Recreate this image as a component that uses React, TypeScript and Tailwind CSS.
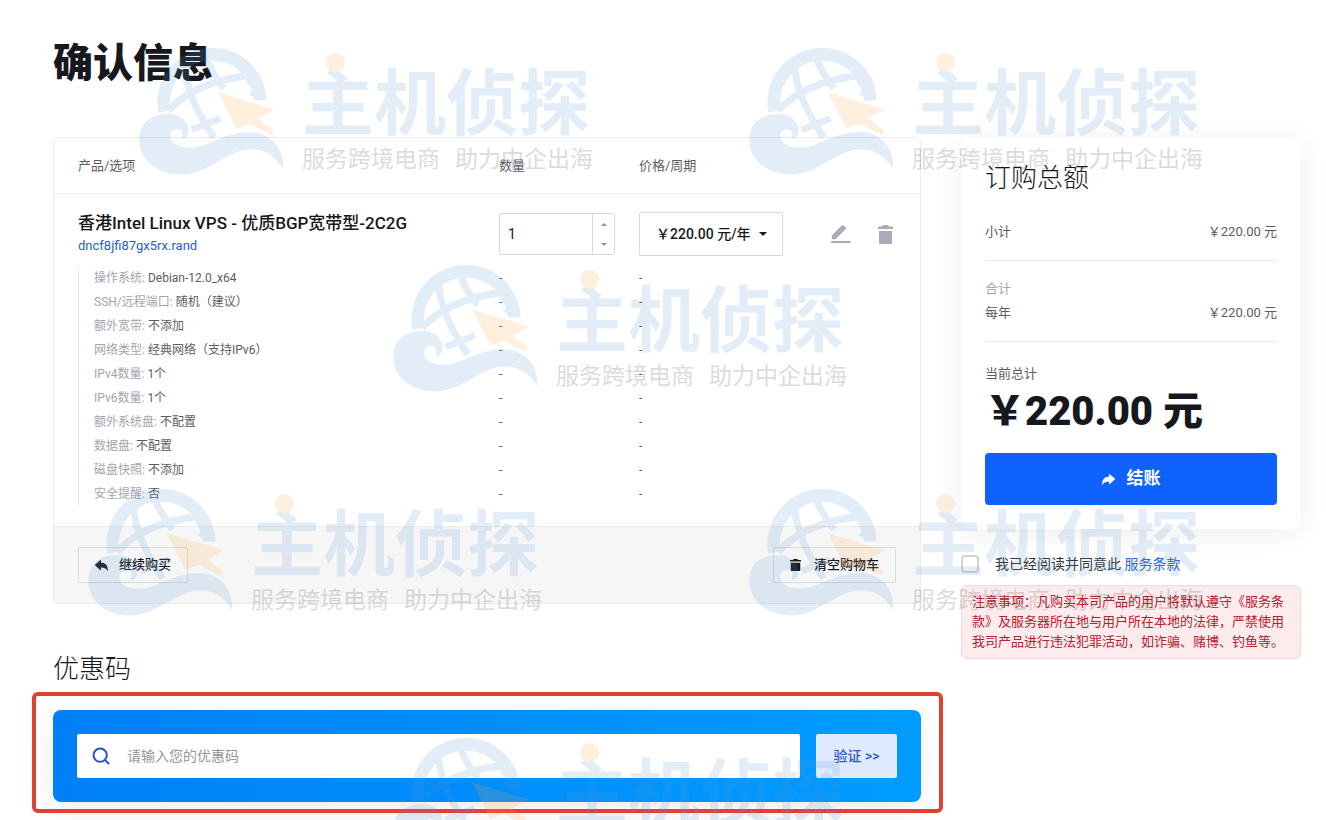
import { useState } from "react"
import { Search } from "lucide-react"

type Option = { label: string; value: string }

const options: Option[] = [
  { label: "操作系统", value: "Debian-12.0_x64" },
  { label: "SSH/远程端口", value: "随机（建议）" },
  { label: "额外宽带", value: "不添加" },
  { label: "网络类型", value: "经典网络（支持IPv6）" },
  { label: "IPv4数量", value: "1个" },
  { label: "IPv6数量", value: "1个" },
  { label: "额外系统盘", value: "不配置" },
  { label: "数据盘", value: "不配置" },
  { label: "磁盘快照", value: "不添加" },
  { label: "安全提醒", value: "否" },
]

export default function App() {
  return (
    <div className="relative min-h-screen overflow-hidden bg-white pt-10 pr-[25px] pb-[18px] pl-[53px] font-['Roboto','Noto_Sans_CJK_SC',sans-serif] text-[13px] text-[#5b5d66]">
      <h1 className="text-[40px] leading-12 font-black text-[#16181d]">确认信息</h1>
      <div className="mt-[49px] flex items-start gap-10">
        <main className="min-w-0 flex-1">
          <Cart />
          <Promo />
        </main>
        <aside className="w-[340px] shrink-0">
          <Summary />
          <Terms />
        </aside>
      </div>
      <div aria-hidden="true" className="pointer-events-none absolute inset-0 overflow-hidden opacity-[0.17]">
        <Watermark className="top-12 left-[139px]" />
        <Watermark className="top-12 left-[749px]" />
        <Watermark className="top-[265px] left-[393px]" />
        <Watermark className="top-[489px] left-[88px]" />
        <Watermark className="top-[489px] left-[749px]" />
        <Watermark className="top-[738px] left-[393px]" />
      </div>
    </div>
  )
}

function Cart() {
  const [qty, setQty] = useState(1)

  return (
    <section className="overflow-hidden rounded-md border border-[#ebebed]">
      <table className="w-full table-fixed border-collapse text-left">
        <colgroup>
          <col />
          <col className="w-[140px]" />
          <col className="w-[144px]" />
          <col className="w-[137px]" />
        </colgroup>
        <thead>
          <tr className="h-[55px] border-b border-[#ebebed]">
            <th className="pl-6 font-normal">产品/选项</th>
            <th className="font-normal">数量</th>
            <th className="font-normal">价格/周期</th>
            <td />
          </tr>
        </thead>
        <tbody>
          <tr className="h-[73px]">
            <td className="pt-2 pl-6">
              <div className="text-[17px] leading-6 font-medium text-[#16181d]">香港Intel Linux VPS - 优质BGP宽带型-2C2G</div>
              <a href="#" className="block leading-[22px] text-[#1f5fd0]">
                dncf8jfi87gx5rx.rand
              </a>
            </td>
            <td className="pt-[9px]">
              <div className="flex h-[42px] w-[116px] rounded-xs border border-[#d9dadd]">
                <input
                  aria-label="数量"
                  inputMode="numeric"
                  value={qty}
                  onChange={(e) => setQty(Number(e.target.value) || 1)}
                  className="w-0 flex-1 px-2 text-sm text-[#16181d] outline-none"
                />
                <div className="flex w-[22px] flex-col border-l border-[#d9dadd] text-[#8e9098]">
                  <button aria-label="增加" onClick={() => setQty(qty + 1)} className="flex flex-1 items-center justify-center">
                    <Caret className="h-[3px] w-[6px] rotate-180" />
                  </button>
                  <button aria-label="减少" onClick={() => setQty(Math.max(1, qty - 1))} className="flex flex-1 items-center justify-center">
                    <Caret className="h-[3px] w-[6px]" />
                  </button>
                </div>
              </div>
            </td>
            <td className="pt-[9px]">
              <div className="relative">
                <select
                  aria-label="价格/周期"
                  className="h-11 w-full appearance-none rounded-xs border border-[#d9dadd] bg-white pl-4 text-sm font-medium text-[#16181d]"
                >
                  <option>￥220.00 元/年</option>
                </select>
                <Caret className="pointer-events-none absolute top-5 right-4 h-1 w-2 text-[#16181d]" />
              </div>
            </td>
            <td className="pt-[9px]">
              <div className="flex items-center justify-end gap-[27px] pr-[27px] text-[#a9abb8]">
                <button aria-label="编辑">
                  <PencilIcon />
                </button>
                <button aria-label="删除">
                  <TrashIcon className="h-[19px] w-[15px]" />
                </button>
              </div>
            </td>
          </tr>
          {options.map((o) => (
            <tr key={o.label} className="h-6 text-xs">
              <td className="pl-6">
                <div className="border-l border-[#ebebed] pl-[15px] leading-6">
                  <span className="text-[#a3a5ae]">{o.label}:</span> {o.value}
                </div>
              </td>
              <td>-</td>
              <td>-</td>
              <td />
            </tr>
          ))}
        </tbody>
      </table>
      <div className="mt-5 flex justify-between border-t border-[#ebebed] bg-[#f6f6f6] px-6 py-5">
        <button className="flex h-9 items-center gap-[11px] rounded-xs border border-[#d9dadd] px-4 font-medium text-[#16181d]">
          <ArrowIcon className="h-[11px] w-[13px]" />
          继续购买
        </button>
        <button className="flex h-9 items-center gap-[13px] rounded-xs border border-[#d9dadd] px-4 font-medium text-[#16181d]">
          <TrashIcon className="h-3 w-[11px]" />
          清空购物车
        </button>
      </div>
    </section>
  )
}

function Promo() {
  return (
    <section>
      <h2 className="mt-[49px] text-[26px] leading-8 font-light text-[#16181d]">优惠码</h2>
      <div className="relative mt-[25px] flex gap-4 rounded-lg bg-linear-to-r from-[#0080f7] to-[#009cff] p-6 shadow-[0_8px_32px_rgba(0,0,0,0.08)]">
        <label className="flex h-11 flex-1 items-center gap-4 rounded-xs bg-white px-[14px]">
          <Search className="h-5 w-5 text-[#2455cc]" strokeWidth={2.4} />
          <input
            aria-label="优惠码"
            placeholder="请输入您的优惠码"
            className="min-w-0 flex-1 text-sm outline-none placeholder:text-[#94969c]"
          />
        </label>
        <button className="h-11 w-[81px] rounded-xs bg-[#dfe9ff] text-sm font-medium text-[#2c5bcb]">验证 &gt;&gt;</button>
        <div className="pointer-events-none absolute -top-[18px] -right-[22px] -bottom-[11px] -left-[21px] rounded-md border-4 border-[#dc4430]" />
      </div>
    </section>
  )
}

function Summary() {
  return (
    <section className="rounded-lg bg-white px-6 pt-[25px] pb-6 shadow-[0_4px_28px_rgba(0,0,0,0.07)]">
      <h2 className="text-[26px] leading-8 font-light text-[#16181d]">订购总额</h2>
      <div className="mt-[26px] flex justify-between leading-6">
        <span>小计</span>
        <span>￥220.00 元</span>
      </div>
      <div className="mt-4 border-y border-[#ebebed] py-4">
        <div className="leading-6 text-[#a3a5ae]">合计</div>
        <div className="flex justify-between leading-6">
          <span>每年</span>
          <span>￥220.00 元</span>
        </div>
      </div>
      <div className="mt-5 leading-6">当前总计</div>
      <div className="pt-[2px] text-[40px] leading-12 font-black text-[#16181d]">￥220.00 元</div>
      <button className="mt-[17px] flex h-[52px] w-full items-center justify-center gap-3 rounded-sm bg-[#0f62fe] text-[17px] font-bold text-white">
        <ArrowIcon className="h-[11px] w-[13px] -scale-x-100" />
        结账
      </button>
    </section>
  )
}

function Terms() {
  return (
    <>
      <div className="mt-[23px] flex items-center text-sm leading-6 text-[#303238]">
        <input id="terms" type="checkbox" className="mr-4 h-[18px] w-[18px] appearance-none rounded-sm border-2 border-[#d0d2d6]" />
        <label htmlFor="terms">
          我已经阅读并同意此{" "}
          <a href="#" className="text-[#1f66e0]">
            服务条款
          </a>
        </label>
      </div>
      <p className="mt-[9px] rounded-md border border-[#f8d5d8] bg-[#fdebed] px-[10px] py-[6px] leading-5 text-[#b3222e]">
        注意事项：凡购买本司产品的用户将默认遵守《服务条款》及服务器所在地与用户所在本地的法律，严禁使用我司产品进行违法犯罪活动，如诈骗、赌博、钓鱼等。
      </p>
    </>
  )
}

function Watermark({ className }: { className: string }) {
  return (
    <div className={`absolute flex w-[454px] justify-between ${className}`}>
      <svg viewBox="9 45 436 382" className="h-[127px] w-[145px]" fill="none">
        <g stroke="#5a9ad8">
          <path d="M86 236A145 145 0 0 1 229 64A145 145 0 0 1 374 202" strokeWidth="38" />
          <path d="M146 98C150 170 190 250 234 314" strokeWidth="21" />
          <path d="M212 78Q232 128 264 166" strokeWidth="21" />
          <path d="M96 234Q175 148 335 128" strokeWidth="22" />
          <path d="M167 291L254 257" strokeWidth="20" />
        </g>
        <path fill="#5a9ad8" d="M325 118L358 140L376 206L340 184Q357 170 336 155Z" />
        <path
          fill="#5a9ad8"
          d="M95 244C128 242 158 264 158 294C158 312 146 320 136 318C142 306 140 292 128 289C113 287 102 297 103 310C105 335 130 345 165 345C215 345 260 300 340 298C400 298 448 340 442 410C420 370 390 350 345 350C270 350 220 425 135 425C60 425 10 380 10 320C10 272 45 242 95 244Z"
        />
        <path fill="#ffa54a" d="M247 178L417 230L367 258L415 292L408 307L342 273L302 288Z" />
      </svg>
      <div className="relative w-[291px] pt-[18px] whitespace-nowrap">
        <div className="absolute top-[5px] left-6 h-[19px] w-[19px] rounded-full bg-[#ffa54a]" />
        <div className="text-[72px] leading-[78px] font-bold text-[#5a9ad8]">主机侦探</div>
        <div className="flex justify-between text-[23px] leading-8 text-[#333]">
          <span>服务跨境电商</span>
          <span>助力中企出海</span>
        </div>
      </div>
    </div>
  )
}

function Caret({ className }: { className: string }) {
  return (
    <svg viewBox="0 0 8 4" className={className} fill="currentColor" preserveAspectRatio="none">
      <path d="M0 0h8L4 4z" />
    </svg>
  )
}

// points left, flip it for the forward direction
function ArrowIcon({ className }: { className: string }) {
  return (
    <svg viewBox="0 0 13 11" className={className} fill="currentColor">
      <path d="M.2 4.6L5.2.2Q6 -.2 6 .8V2.8C10.5 2.8 12.8 5.4 12.8 10.4Q12.6 11 12.2 10.4C10.8 8.2 9 7.4 6 7.4V9.4Q6 10.4 5.2 9.9L.2 5.6Q-.2 5.1 .2 4.6z" />
    </svg>
  )
}

function PencilIcon() {
  return (
    <svg viewBox="0 0 20 20" className="h-5 w-5" fill="currentColor">
      <path d="M.8 11.4L11 1.2Q11.7 .6 12.4 1.2L14.8 3.6Q15.4 4.3 14.8 5L4.6 15.2H.8z" />
      <rect x="0" y="17" width="20" height="2" rx="1" />
    </svg>
  )
}

function TrashIcon({ className }: { className: string }) {
  return (
    <svg viewBox="0 0 15 19" className={className} fill="currentColor" preserveAspectRatio="none">
      <path d="M5 0h5l1 1.5h4V4H0V1.5H4zM1 6h13v12q0 1-1 1h-11q-1 0-1-1z" />
    </svg>
  )
}
